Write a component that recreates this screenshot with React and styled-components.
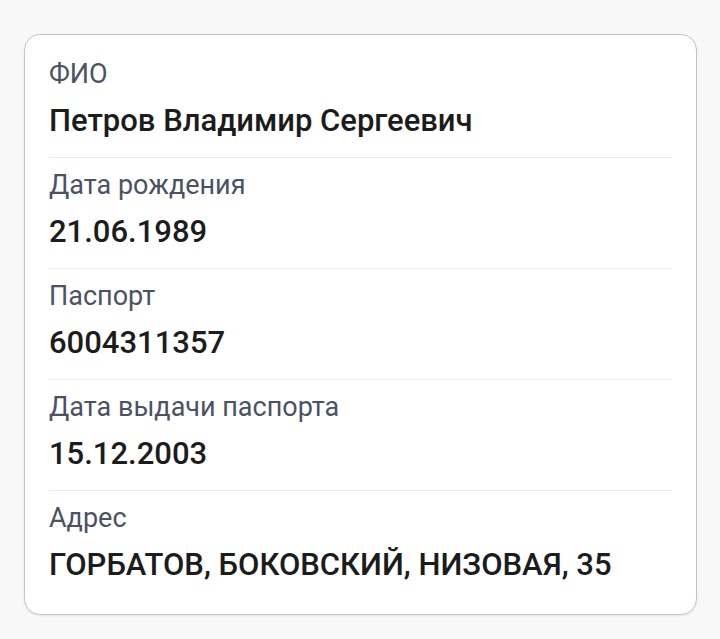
import React from "react";
import styled, { createGlobalStyle } from "styled-components";

const GlobalStyle = createGlobalStyle`
  html, body {
    margin: 0;
    padding: 0;
    background: #f8f8f8;
    font-family: Roboto, "Noto Sans", "Liberation Sans", sans-serif;
  }
`;

const Page = styled.div`
  display: flex;
  flex-direction: column;
  gap: 24px;
  padding: 34px 23px 24px 24px;
`;

const Card = styled.div`
  background: #fff;
  border: 1px solid #c4c4c4;
  border-radius: 16px;
  box-shadow: 0 1px 2px rgba(0, 0, 0, 0.08);
  padding: 12px 24px 13px;
  min-height: ${({ $minH }) => $minH || "auto"};
`;

const Row = styled.div`
  padding: 11px 0 18px;
  border-bottom: ${({ $last }) => ($last ? "none" : "1px solid #ebebeb")};
`;

const Label = styled.div`
  font-size: 27px;
  line-height: 33px;
  color: #4a5264;
`;

const Value = styled.div`
  margin-top: 12px;
  font-size: 31px;
  line-height: 36px;
  font-weight: 500;
  color: #1c1c1c;
`;

const fields = [
  { label: "ФИО", value: "Петров Владимир Сергеевич" },
  { label: "Дата рождения", value: "21.06.1989" },
  { label: "Паспорт", value: "6004311357" },
  { label: "Дата выдачи паспорта", value: "15.12.2003" },
  { label: "Адрес", value: "ГОРБАТОВ, БОКОВСКИЙ, НИЗОВАЯ, 35" },
];

const App = () => {
  return (
    <>
      <GlobalStyle />
      <Page>
        <Card>
          {fields.map((f, i) => (
            <Row key={f.label} $last={i === fields.length - 1}>
              <Label>{f.label}</Label>
              <Value>{f.value}</Value>
            </Row>
          ))}
        </Card>
        {/* next card, only its top edge is on screen */}
        <Card $minH="120px" />
      </Page>
    </>
  );
};

export default App;
